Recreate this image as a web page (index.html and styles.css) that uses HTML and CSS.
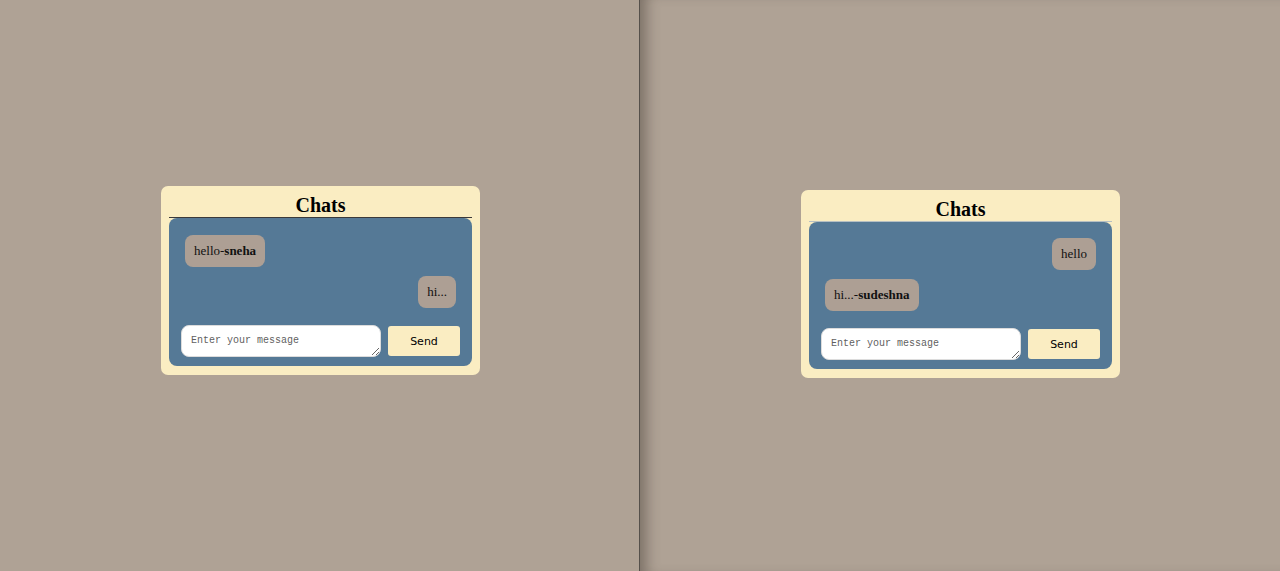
FILE: index.html
```html
<!DOCTYPE html>
<html>
<head>
<meta charset="utf-8">
<link rel="stylesheet" href="styles.css">
</head>
<body>
<div class="pane pane-left">
  <div class="card">
    <div class="title title-dark">Chats</div>
    <div class="chat">
      <div class="msgs">
        <div class="bubble in">hello-<b>sneha</b></div>
        <div class="bubble out">hi...</div>
      </div>
      <div class="composer">
        <textarea class="input" placeholder="Enter your message"></textarea>
        <button class="send">Send</button>
      </div>
    </div>
  </div>
</div>
<div class="pane pane-right">
  <div class="card">
    <div class="title title-light">Chats</div>
    <div class="chat">
      <div class="msgs">
        <div class="bubble out">hello</div>
        <div class="bubble in">hi...-<b>sudeshna</b></div>
      </div>
      <div class="composer">
        <textarea class="input" placeholder="Enter your message"></textarea>
        <button class="send">Send</button>
      </div>
    </div>
  </div>
</div>
</body>
</html>
```

FILE: styles.css
```css
html, body {
  margin: 0;
  padding: 0;
  height: 100%;
  overflow: hidden;
}
body {
  display: flex;
  background: #afa295;
  font-family: "Liberation Serif", "Times New Roman", serif;
}
.pane {
  height: 571px;
  display: flex;
  justify-content: center;
  align-items: flex-start;
  box-sizing: border-box;
}
.pane-left {
  width: 640px;
  border-right: 1px solid #55504b;
  padding-left: 2px;
  padding-top: 186px;
}
.pane-right {
  width: 640px;
  padding-left: 1px;
  padding-top: 190px;
  box-shadow: inset 14px 0 14px -8px rgba(60, 52, 45, 0.45);
}
.card {
  width: 319px;
  box-sizing: border-box;
  background: #faedc2;
  border-radius: 7px;
  padding: 0 8px 9px 8px;
}
.title {
  text-align: center;
  font-weight: bold;
  font-size: 20px;
  line-height: 23px;
  padding-top: 8px;
  color: #000;
}
.title-dark { border-bottom: 1px solid #3a3a3a; }
.title-light { border-bottom: 1px solid #b7c0c2; }
.chat {
  background: #557996;
  border-radius: 8px;
  padding: 17px 11px 9px 12px;
  display: flex;
  flex-direction: column;
  gap: 17px;
}
.pane-right .chat { padding-top: 16px; }
.msgs {
  display: flex;
  flex-direction: column;
  gap: 9px;
  padding: 0 5px 0 4px;
}
.bubble {
  background: #ad9f94;
  border-radius: 8px;
  padding: 8px 9px;
  font-size: 13px;
  line-height: 16px;
  color: #111;
}
.bubble.in { align-self: flex-start; }
.bubble.out { align-self: flex-end; }
.composer {
  display: flex;
  align-items: center;
  gap: 7px;
}
.input {
  width: 200px;
  height: 32px;
  box-sizing: border-box;
  border: 1px solid #dcdcdc;
  border-radius: 8px;
  background: #fff;
  padding: 8px 9px 6px;
  font-family: "Liberation Mono", "DejaVu Sans Mono", monospace;
  font-size: 10px;
  line-height: 13px;
  margin: 0;
}
.input::placeholder { color: #5f5f5f; }
.send {
  width: 72px;
  height: 30px;
  border: none;
  border-radius: 3px;
  background: #faedc2;
  font-family: "DejaVu Sans", "Liberation Sans", sans-serif;
  font-size: 11px;
  color: #000;
  padding: 0;
  margin: 0;
}
```
